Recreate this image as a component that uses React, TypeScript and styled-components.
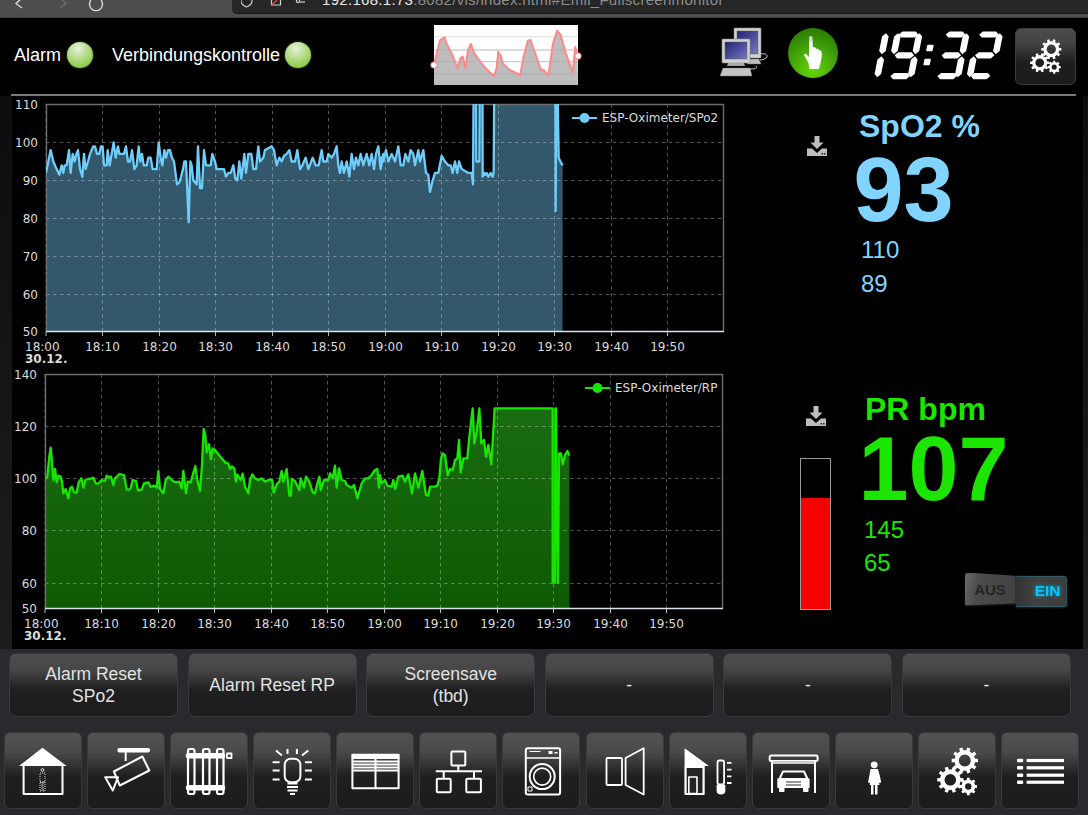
import React from 'react';
import styled, { createGlobalStyle } from 'styled-components';

const Global = createGlobalStyle`
  html, body { margin: 0; padding: 0; background: #282a2d; }
  * { box-sizing: border-box; }
`;

const FONT = `"Liberation Sans", Arial, sans-serif`;
const CHART_FONT = `"DejaVu Sans", Verdana, sans-serif`;

/* ---------- data, traced from the reference ---------- */
type P = [number, number];
const spo2A: P[] = [[138,92],[145,95],[152,98],[160,95],[170,93],[178,91.5],[185,94],[190,92],[194,94],[200,94],[207,98],[212,92],[218,97],[224,95],[229,97],[234,98],[240,93],[247,91],[252,97],[257,93],[264,95],[270,97],[280,99],[285,99],[291,97],[298,97],[303,99],[308,99],[312,94],[320,94],[323,98],[329,94],[335,97],[341,100],[347,96],[354,99],[358,97],[372,97],[378,99],[384,95],[390,95],[396,98],[403,93],[410,94],[416,99],[421,95],[426,97],[431,94],[440,94],[445,96],[452,96],[458,93],[470,93],[476,100],[482,96],[487,94],[493,98],[498,96],[504,98],[510,98],[516,96],[522,95],[528,91],[531,89],[538,89.5],[543,91],[549,93],[553,95],[558,95],[562,87],[566,79],[571,95],[575,94],[580,90],[590,89],[594,99],[600,88],[606,88],[612,98],[618,94],[625,94],[632,94],[637,97],[645,95],[650,93],[660,93],[672,93],[678,91],[685,92],[692,92],[700,94],[706,90.5],[712,90],[718,95],[724,90.5],[733,97],[738,92],[745,97],[754,97],[760,93],[768,93],[775,99],[780,95],[790,96],[795,98],[805,98.5],[815,99],[822,98],[830,94],[838,96],[845,95],[852,96.5],[860,97],[868,98],[875,95],[885,95],[892,98],[900,93],[907,94],[917,96],[925,93],[938,96],[947,94],[956,94],[965,98],[970,95],[980,95],[985,97],[995,96],[1002,97],[1010,99],[1015,94],[1020,92],[1025,95],[1032,92],[1040,95],[1048,91],[1055,97],[1062,93],[1068,96],[1075,94],[1082,97],[1090,94],[1100,97],[1108,94],[1115,97],[1122,93],[1128,97],[1135,99],[1142,93],[1150,97]];
const spo2B: P[] = [[0,94],[5,96],[10,95],[18,98],[25,95],[35,97],[45,95],[55,99],[62,94],[70,94],[76,97],[85,95],[92,98],[100,97],[105,94],[115,98],[120,95],[130,98],[138,92],[145,91.5],[150,87],[158,90],[165,92],[175,92],[185,96.5],[195,95],[205,94],[212,94],[218,92],[225,95],[232,92],[237,95],[245,93],[255,92.5],[265,92],[275,92],[279,89],[282,130],[288,130],[289,95],[298,95],[300,130],[307,130],[308,91],[312,92],[316,91.5],[320,92],[325,91],[332,92],[338,91],[341,92],[344,130],[526,130],[527,82],[530,130],[536,96],[541,95],[548,94]];
const rpA: P[] = [[135,340],[142,335],[148,275],[152,248],[156,290],[160,345],[165,312],[170,352],[175,332],[182,335],[186,350],[190,385],[197,372],[205,400],[210,370],[216,365],[222,382],[230,383],[236,352],[244,340],[250,368],[256,345],[265,342],[275,340],[280,338],[288,356],[296,355],[305,345],[315,348],[320,332],[326,336],[333,335],[340,360],[345,340],[358,327],[372,330],[380,373],[386,374],[392,370],[398,345],[408,348],[414,376],[425,374],[432,355],[445,352],[452,366],[462,362],[470,368],[475,318],[480,372],[490,385],[497,345],[505,335],[515,345],[525,352],[538,350],[545,370],[550,318],[558,385],[563,350],[572,352],[578,330],[586,303],[592,345],[600,378],[606,300],[611,192],[616,210],[620,262],[627,238],[633,282],[638,250],[645,255],[655,268],[665,280],[675,292],[685,296],[690,312],[696,304],[703,310],[708,350],[712,328],[722,345],[728,326],[735,365],[745,385],[750,345],[757,328],[765,340],[775,345],[785,340],[795,350],[805,345],[817,345],[821,383],[830,358],[838,350],[845,318],[850,350],[860,312],[868,392],[873,392],[875,342],[885,348],[898,375],[902,340],[912,368],[918,335],[928,350],[938,382],[945,385],[952,355],[958,335],[962,375],[972,345],[985,345],[990,325],[998,340],[1005,302],[1010,368],[1017,310],[1025,345],[1035,348],[1040,360],[1055,368],[1062,360],[1072,400],[1085,355],[1095,340],[1105,340],[1115,330],[1125,315],[1132,312],[1137,368]];
const rpB: P[] = [[0,330],[5,355],[15,345],[22,362],[35,365],[40,345],[46,372],[55,335],[68,332],[75,350],[85,328],[96,385],[105,325],[115,368],[127,318],[138,390],[145,392],[150,365],[165,365],[172,362],[178,340],[183,280],[188,265],[195,270],[203,330],[210,312],[218,315],[225,285],[232,280],[237,225],[242,322],[250,280],[262,280],[268,215],[278,130],[283,235],[290,200],[298,130],[304,235],[312,225],[318,275],[325,240],[334,298],[344,130],[518,130],[518,653],[525,653],[526,130],[528,130],[530,400],[534,653],[537,265],[543,265],[548,298],[555,270],[562,258],[568,272]];

const spo2Y = (v: number) => 142.5 + (100 - v) * 3.8;
const spo2Line: P[] = [
  ...spo2A.map(([x, v]): P => [x / 3, spo2Y(v)]),
  ...spo2B.map(([x, v]): P => [380 + x / 3, spo2Y(v)]),
];
const rpLine: P[] = [
  ...rpA.map(([x, y]): P => [x / 3, 365 + y / 3]),
  ...rpB.map(([x, y]): P => [380 + x / 3, 365 + y / 3]),
];

const LABELS = ['18:00','18:10','18:20','18:30','18:40','18:50','19:00','19:10','19:20','19:30','19:40','19:50'];
const TICKS = [46, 102.5, 159.5, 215.5, 272.5, 328.5, 385.5, 441.5, 498.5, 554.5, 611.5, 667.5];

/* ---------- layout ---------- */
const Page = styled.div`
  width: 1088px; height: 815px; overflow: hidden;
  background: #282a2d;
  display: flex; flex-direction: column;
  font-family: ${FONT};
`;
const BrowserBar = styled.div`
  height: 18px; flex: none; display: flex; align-items: flex-start;
  background: #4d4d4d; border-bottom: 1px solid #3c3c3c; overflow: hidden;
`;
const NavGroup = styled.div`
  width: 232px; flex: none; height: 13px;
`;
const UrlBar = styled.div`
  flex: 1; height: 13.5px; background: #262626; border-bottom-left-radius: 5px;
  border-bottom: 1px solid #1b1b1b;
  display: flex; align-items: flex-start; padding-left: 9px; overflow: hidden;
`;
const UrlText = styled.div`
  margin: -7px 0 0 13px; font-size: 15px; line-height: 13px; color: #8d8d8d; white-space: nowrap;
  letter-spacing: .3px;
`;
const UrlHost = styled.span` color: #e8e8e8; `;
const BarIcons = styled.svg` display: block; flex: none; `;

const Header = styled.header`
  height: 76px; flex: none; background: #000; display: flex; padding-left: 14px; color: #fff;
`;
const StatusText = styled.span<{ $ml?: number }>`
  font-size: 18px; line-height: 20px; margin: 27px 0 0 ${p => p.$ml ?? 0}px; color: #fff;
`;
const Ball = styled.span<{ $ml: number }>`
  width: 26px; height: 26px; border-radius: 50%; flex: none; margin: 24px 0 0 ${p => p.$ml}px;
  background: radial-gradient(circle at 42% 26%, #e8f2de 0%, #c2e2a2 30%, #98ce56 68%, #76b92c 100%);
  box-shadow: 0 0 2px #5f9a2a;
`;
const SparkSvg = styled.svg`
  display: block; flex: none; margin: 7px 0 0 123px; overflow: visible;
`;
const DrawnIcon = styled.svg<{ $ml: number; $mt: number }>`
  display: block; flex: none; margin: ${p => p.$mt}px 0 0 ${p => p.$ml}px; overflow: visible;
`;
const SettingsButton = styled.div`
  width: 61px; height: 57px; flex: none; margin: 10px 0 0 11px;
  background: linear-gradient(#4c4c4c 0%, #444 25%, #1e1e1e 60%, #1c1c1c 100%);
  border: 1px solid #3d3d3d; border-radius: 6px;
  display: flex; align-items: center; justify-content: center;
`;
const Separator = styled.div`
  flex: none; height: 2px; background: #000;
  &::before { content: ''; display: block; height: 1.5px; width: 1065px; margin-left: 11px; background: #7a7a7a; }
`;
const MainBand = styled.div`
  height: 553px; flex: none; padding: 0 5px 0 12px;
  background: linear-gradient(#0b0d0e, #1c1d1f);
`;
const Main = styled.main`
  height: 100%; background: #000; display: flex;
`;
const ChartColumn = styled.div`
  width: 720px; flex: none; display: flex; flex-direction: column;
`;
const ChartSvg = styled.svg`
  display: block; flex: none;
`;
const AxisText = styled.text<{ $bold?: boolean }>`
  font-family: ${CHART_FONT}; font-size: 12px; fill: #dcdcdc;
  font-weight: ${p => (p.$bold ? 700 : 400)};
`;
const ReadingColumn = styled.div`
  flex: 1; display: flex; flex-direction: column;
`;
const ReadingPanel = styled.section<{ $h: number; $pt: number }>`
  height: ${p => p.$h}px; padding-top: ${p => p.$pt}px; display: flex; position: relative;
`;
const SideColumn = styled.div<{ $w: number; $top: number }>`
  width: ${p => p.$w}px; flex: none; padding: ${p => p.$top}px 0 0 68px;
`;
const DownloadIcon = styled.svg<{ $ml: number }>`
  display: block; margin-left: ${p => p.$ml}px;
`;
const Gauge = styled.div<{ $level: number }>`
  width: 31px; height: 152px; margin-top: 32px;
  border: 1px solid #9a9a9a; background: #000; display: flex; align-items: flex-end;
  &::after { content: ''; display: block; width: 100%; height: ${p => p.$level}%; background: #f60000; }
`;
const ReadingText = styled.div<{ $c: string; $ml: number }>`
  color: ${p => p.$c}; flex: 1; margin-left: ${p => p.$ml}px;
`;
const Title = styled.div<{ $ml: number }>`
  font-size: 32px; line-height: 32px; font-weight: 700; margin-left: ${p => p.$ml}px; white-space: nowrap;
`;
const Value = styled.div<{ $mt: number }>`
  font-size: 90px; line-height: 80px; height: 80px; font-weight: 700; margin-top: ${p => p.$mt}px;
`;
const Limit = styled.div<{ $ml: number; $lh: number; $mt?: number }>`
  font-size: 24px; line-height: ${p => p.$lh}px; margin: ${p => p.$mt ?? 0}px 0 0 ${p => p.$ml}px;
`;
const Toggle = styled.div`
  width: 102px; height: 35px; margin: -6px 0 0 106px; display: flex;
  filter: drop-shadow(0 1px 1px #1c1c1c);
`;
const ToggleOff = styled.div`
  width: 51px; flex: none; height: 33px;
  background: linear-gradient(100deg, #6a6a6a, #4c4c4c 25%, #404040);
  clip-path: polygon(3% 0, 100% 10%, 100% 94%, 0 100%, 0 6%);
  border-radius: 3px 0 0 3px;
  display: flex; align-items: center; justify-content: center;
  font-size: 15px; font-weight: 700; color: #252525;
`;
const ToggleOn = styled.div`
  flex: 1; height: 31px; margin-top: 3px;
  background: linear-gradient(90deg, #343434, #414141 40%, #3c3c3c);
  border: 1px solid rgba(0, 190, 240, .22); border-left: none; border-radius: 0 3px 3px 0;
  box-shadow: 0 0 2px rgba(0, 190, 240, .3);
  display: flex; align-items: center; justify-content: flex-end; padding-right: 5px;
  font-size: 15.5px; font-weight: 700; color: #00c8ff;
  text-shadow: 0 0 4px rgba(0, 200, 255, .7);
`;
const ActionRow = styled.div`
  margin-top: 4px; padding-left: 9px; display: flex; gap: 9.6px; flex: none;
`;
const ActionButton = styled.button`
  width: 169px; height: 64px; padding: 0 6px; flex: none;
  font: 17.5px/22px ${FONT}; color: #e2e2e2; text-align: center;
  background: linear-gradient(#4d4d4d 0%, #474747 25%, #1f1f1f 58%, #1d1d1d 100%);
  border: 1px solid #3a3a3a; border-radius: 7px;
`;
const NavRow = styled.nav`
  margin-top: 15px; padding-left: 4px; display: flex; gap: 5.08px; flex: none;
`;
const NavButton = styled.div`
  width: 78px; height: 77px; flex: none;
  background: linear-gradient(#525252 0%, #4a4a4a 25%, #1f1f1f 58%, #1c1c1c 100%);
  border: 1px solid #38393b; border-radius: 6px;
  display: flex; align-items: center; justify-content: center;
`;
const NavIcon = styled.svg`
  width: 60px; height: 60px; display: block; flex: none;
  fill: none; stroke: #fff; stroke-width: 2; stroke-linejoin: round;
`;

/* ---------- drawings ---------- */
function gear(cx: number, cy: number, r: number, teeth: number, hole: number) {
  const inner = r * 0.78;
  let d = '';
  const step = (Math.PI * 2) / teeth;
  for (let i = 0; i < teeth; i++) {
    const a = i * step;
    const pts: [number, number][] = [
      [inner, a - step * 0.5],
      [inner, a - step * 0.27],
      [r, a - step * 0.2],
      [r, a + step * 0.2],
      [inner, a + step * 0.27],
    ];
    pts.forEach(([rr, t], j) => {
      d += `${i === 0 && j === 0 ? 'M' : 'L'}${(cx + rr * Math.cos(t)).toFixed(2)} ${(cy + rr * Math.sin(t)).toFixed(2)}`;
    });
  }
  d += 'Z';
  d += `M${cx - hole} ${cy}a${hole} ${hole} 0 1 0 ${hole * 2} 0a${hole} ${hole} 0 1 0 ${-hole * 2} 0Z`;
  return d;
}

/* seven-segment lamp display */
const SEG: Record<string, number[]> = { '1': [1, 2], '9': [0, 1, 2, 3, 5, 6], '3': [0, 1, 2, 3, 6], '2': [0, 1, 3, 4, 6] };
const SW = 21.5, HT = 3.1, VT = 3.3;
const hSeg = (y: number) => `1,${y} ${1 + HT},${y - HT} ${SW - 1 - HT},${y - HT} ${SW - 1},${y} ${SW - 1 - HT},${y + HT} ${1 + HT},${y + HT}`;
const vSeg = (x: number, y0: number, y1: number) => `${x},${y0} ${x + VT},${y0 + VT} ${x + VT},${y1 - VT} ${x},${y1} ${x - VT},${y1 - VT} ${x - VT},${y0 + VT}`;
const SEGS = [hSeg(3.2), vSeg(SW, 2, 23), vSeg(SW, 25, 46), hSeg(44.8), vSeg(0, 25, 46), vSeg(0, 2, 23), hSeg(24)];
const Digit = ({ d, x }: { d: string; x: number }) => (
  <g transform={`translate(${x} 0)`}>
    {SEG[d].map(i => <polygon key={i} points={SEGS[i]} fill="#fff" />)}
  </g>
);
const Clock = () => (
  <DrawnIcon $ml={37} $mt={12} width={129} height={50} viewBox="0 0 129 50" role="img" aria-label="19:32">
    <g transform="translate(0 1.300) skewX(-11.300)">
      <Digit d="1" x={-10.1} />
      <Digit d="9" x={23.4} />
      <rect x="55" y="13.500" width="6.500" height="6.500" rx="1" fill="#fff" />
      <rect x="55" y="27.500" width="6.500" height="6.500" rx="1" fill="#fff" />
      <Digit d="3" x={70.4} />
      <Digit d="2" x={103.8} />
    </g>
  </DrawnIcon>
);

const Spark = () => {
  const a: P[] = [[1252,195],[1262,150],[1270,120],[1282,112],[1290,135],[1305,165],[1320,205],[1328,175],[1335,170],[1342,205],[1350,150],[1358,132],[1368,160],[1385,185],[1405,210],[1425,228],[1432,205],[1437,155],[1445,170],[1450,190],[1470,210],[1500,225],[1510,170],[1522,122],[1530,120],[1545,165],[1560,210]];
  const b: P[] = [[0,210],[15,225],[28,130],[40,92],[50,105],[65,160],[85,218],[92,140],[98,168]];
  const pts: P[] = [
    ...a.map(([x, y]): P => [x / 2.88 - 434.7, y / 3 - 25]),
    ...b.map(([x, y]): P => [544 + x / 2.88 - 434.7, y / 3 - 25]),
  ];
  const s = pts.map(p => p.join(',')).join(' ');
  return (
    <SparkSvg width={144} height={60} viewBox="0 0 144 60">
      <rect width="144" height="60" fill="#fff" />
      {[11.7, 25, 36.7, 49].map(y => <line key={y} x1="0" x2="144" y1={y} y2={y} stroke="#ddd" />)}
      <polygon points={`${s} 144,60 0,60`} fill="#bdbdbd" />
      {[25, 36.7, 49].map(y => <line key={y} x1="0" x2="144" y1={y} y2={y} stroke="#aaa" strokeOpacity=".5" />)}
      <polyline points={s} fill="none" stroke="#f88" strokeWidth="2" strokeLinejoin="round" />
      <circle cx="0" cy="40" r="3.2" fill="#fff" stroke="#f77" strokeWidth="1" />
      <circle cx="144" cy="31" r="3.2" fill="#fff" stroke="#f77" strokeWidth="1" />
    </SparkSvg>
  );
};

const Screen = ({ x, y, w, h, id }: { x: number; y: number; w: number; h: number; id: string }) => (
  <g>
    <rect x={x} y={y} width={w} height={h} fill="#d2d2d2" stroke="#8a8a8a" strokeWidth=".6" rx="1" />
    <rect x={x + 3} y={y + 3} width={w - 6} height={h - 7} fill={`url(#${id})`} stroke="#666" strokeWidth=".5" />
  </g>
);
const Computers = () => (
  <DrawnIcon $ml={142} $mt={10} width={48} height={48} viewBox="0 0 48 48">
    <defs>
      <linearGradient id="scr" x1="0" y1="0" x2="1" y2="1">
        <stop offset="0" stopColor="#23236a" /><stop offset=".5" stopColor="#4b4b9c" /><stop offset="1" stopColor="#7a7ab8" />
      </linearGradient>
    </defs>
    <Screen x={14} y={0} w={27} h={30} id="scr" />
    <path d="M29 31h10l2 5H27z" fill="#bdbdbd" stroke="#777" strokeWidth=".5" />
    <path d="M40 26c5-1 8 1 7 3s-5 3-7 3" fill="none" stroke="#c8c8c8" strokeWidth="1" />
    <Screen x={2} y={11} w={28} h={24} id="scr" />
    <path d="M8 35h16l1 3H7z" fill="#aaa" />
    <path d="M3 40h27l2 8H0z" fill="#c4c4c4" stroke="#777" strokeWidth=".5" />
    <path d="M30 41c4 0 8 0 6-3" fill="none" stroke="#c8c8c8" strokeWidth="1" />
  </DrawnIcon>
);
const TouchButton = () => (
  <DrawnIcon $ml={20} $mt={10} width={50} height={50} viewBox="0 0 50 50">
    <defs>
      <radialGradient id="tb" cx=".5" cy=".85" r=".8">
        <stop offset="0" stopColor="#66d600" /><stop offset=".55" stopColor="#43a60a" /><stop offset="1" stopColor="#2e8000" />
      </radialGradient>
    </defs>
    <circle cx="25" cy="25" r="25" fill="url(#tb)" />
    <path d="M21 9.500Q22.500 7 24.500 9.500L24.800 19.500L27 19L28 21L30 20.500L31 22.500L33 22.500L34 26L33 33L31 41L21.500 41L20.500 35L16 27Q16 25 18 26L21 29Z" fill="#fff" />
    <rect x="21.400" y="9.500" width="2.200" height="4" rx="1" fill="none" stroke="#8a8a8a" strokeWidth=".6" />
  </DrawnIcon>
);
const Gears = () => (
  <svg width={61} height={57} viewBox="0 0 61 57" fill="#fff" style={{ display: 'block' }}>
    <path fillRule="evenodd" d={gear(36.5, 21, 10.5, 10, 4.8)} />
    <path fillRule="evenodd" d={gear(24.5, 35, 10, 10, 4.5)} />
    <path fillRule="evenodd" d={gear(39.5, 39.5, 6.8, 8, 2.6)} />
  </svg>
);
const Download = ({ ml }: { ml: number }) => (
  <DownloadIcon $ml={ml} width={20} height={20} viewBox="0 0 20 20">
    <path d="M7.5 0h5v6.5h4L10 13 3.5 6.5h4zM0 12.5h5L10 17l5-4.5h5V20H0z" fill="#bdbdbd" />
    <rect x="14.5" y="17" width="1.5" height="1.5" fill="#222" />
    <rect x="17" y="17" width="1.5" height="1.5" fill="#222" />
  </DownloadIcon>
);

type ChartProps = {
  originY: number; height: number; left: number; right: number; top: number; bottom: number;
  line: P[]; endX: number; color: string; fillFrom: string; fillTo: string;
  yTicks: [string, number][]; dx: number; legend: string; legendX: number; id: string;
};
const Chart = ({ originY, height, left, right, top, bottom, line, endX, color, fillFrom, fillTo, yTicks, dx, legend, legendX, id }: ChartProps) => {
  const s = line.map(p => p.join(',')).join(' ');
  const first = line[0];
  const labelY = bottom + 19;
  return (
    <ChartSvg width={720} height={height} viewBox={`12 ${originY} 720 ${height}`}>
      <defs>
        <clipPath id={id}><rect x={left} y={top} width={right - left} height={bottom - top} /></clipPath>
        <linearGradient id={id + 'f'} x1="0" y1="0" x2="0" y2="1">
          <stop offset="0" stopColor={fillFrom} /><stop offset="1" stopColor={fillTo} />
        </linearGradient>
      </defs>
      <g clipPath={`url(#${id})`}>
        <polygon points={`${first[0]},${bottom} ${s} ${endX},${bottom}`} fill={`url(#${id}f)`} />
      </g>
      {TICKS.map(t => (
        <line key={t} x1={t + dx} x2={t + dx} y1={top} y2={bottom} stroke="#fff" strokeOpacity=".32" strokeDasharray="3.5 3.5" />
      ))}
      {yTicks.slice(1, -1).map(([l, y]) => (
        <line key={l} x1={left} x2={right} y1={y} y2={y} stroke="#fff" strokeOpacity=".32" strokeDasharray="3.5 3.5" />
      ))}
      <path d={`M${left + .5} ${bottom}V${top + .5}H${right - .5}V${bottom}`} fill="none" stroke="#6e6e6e" strokeWidth="1.4" />
      <line x1={left} x2={right} y1={bottom - .5} y2={bottom - .5} stroke="#d8e4ea" strokeWidth="1.4" />
      <g clipPath={`url(#${id})`}>
        <polyline points={s} fill="none" stroke={color} strokeWidth="2.3" strokeLinejoin="round" />
      </g>
      {TICKS.map(t => <line key={t} x1={t + dx} x2={t + dx} y1={bottom} y2={bottom + 4} stroke="#bbb" />)}
      {yTicks.map(([l, y]) => <AxisText key={l} x={38 + dx} y={y + 4} textAnchor="end">{l}</AxisText>)}
      {LABELS.map((l, i) => (
        <AxisText key={l} x={i === 0 ? 25 + dx : TICKS[i] + dx} y={labelY} textAnchor={i === 0 ? 'start' : 'middle'}>{l}</AxisText>
      ))}
      <AxisText $bold x={25 + dx} y={bottom + 31}>30.12.</AxisText>
      <line x1={legendX} x2={legendX + 25} y1={top + 14} y2={top + 14} stroke={color} strokeWidth="2" />
      <circle cx={legendX + 12.5} cy={top + 14} r="5" fill={color} />
      <AxisText x={legendX + 30} y={top + 18}>{legend}</AxisText>
    </ChartSvg>
  );
};

/* nav icons; each is drawn on a 60x60 field centred in its button */
const FILL = { fill: '#fff', stroke: 'none' };
const navIcons: React.ReactNode[] = [
  <>
    <polygon points="29.4,6.8 53.7,25 6,25" {...FILL} />
    <path d="M10.6 25V53H49.5V25" />
    <g strokeWidth="1" stroke="#ddd">
      <circle cx="29.5" cy="29" r="1.4" />
      <path d="M27 32h5v9h-5zM27 41h2v9h-2zM30 41h2v9h-2z" strokeDasharray="1 1" />
    </g>
  </>,
  <>
    <rect x="21.4" y="7" width="32.6" height="4.6" rx="2" {...FILL} />
    <line x1="29.7" y1="11" x2="29.7" y2="20" />
    <polygon points="17.9,30.5 46.4,15.5 53.3,29.5 23.8,44.5" />
    <polygon points="9.2,36.2 22,36.2 16.8,49.5" />
  </>,
  <>
    <rect x="9" y="8" width="6.5" height="45" rx="2" strokeWidth="2.2" />
    <rect x="24" y="8" width="6.5" height="45" rx="2" strokeWidth="2.2" />
    <rect x="38" y="8" width="6.5" height="45" rx="2" strokeWidth="2.2" />
    <rect x="6.8" y="12" width="39.4" height="5.5" rx="2.7" {...FILL} />
    <rect x="6.8" y="44" width="39.4" height="5.5" rx="2.7" {...FILL} />
    <rect x="48" y="12.500" width="4.5" height="4.5" strokeWidth="1.8" />
  </>,
  <>
    <rect x="22.7" y="17.8" width="15.7" height="23.4" rx="6" />
    <path d="M25.5 42.5h10M25 46h11M25.5 49.5h10M28 53h5" strokeWidth="2.2" />
    <path d="M10.6 21.2h7M10.6 29.5h7M10.6 38.5h7M42.9 21.2h7M42.9 29.5h7M42.9 38.5h7M14 9.5l5.9 5M25.5 8v5M34.9 8v5M46.3 9.5l-6.3 5" strokeWidth="2" />
  </>,
  <>
    <rect x="7.4" y="13.8" width="46.2" height="33.4" />
    <rect x="6.8" y="13" width="47.4" height="5" {...FILL} />
    <path d="M7.4 20.500h46.2M7.4 23.500h46.2M7.4 26.500h46.2" strokeWidth="1.8" />
    <line x1="7.4" y1="29.500" x2="53.6" y2="29.500" />
    <line x1="30.5" y1="18" x2="30.5" y2="47" />
  </>,
  <>
    <rect x="23.4" y="10.5" width="13.9" height="14" rx="1" />
    <path d="M30.3 24.5V30.2M7.8 30.2H54M15.7 30.2V37.8M46 30.2V37.8" />
    <rect x="8.8" y="37.8" width="13.9" height="13.4" rx="1" />
    <rect x="38.3" y="37.8" width="14.6" height="13.4" rx="1" />
  </>,
  <>
    <g transform="translate(1.500 0)">
      <rect x="13.3" y="7.2" width="34.3" height="46.3" rx="2" />
      <line x1="13.3" y1="17" x2="47.6" y2="17" strokeWidth="1.6" />
      <circle cx="29.7" cy="35.6" r="12.5" strokeWidth="2" />
      <circle cx="29.7" cy="35.6" r="8.5" strokeWidth="1.6" />
      <rect x="15.5" y="46" width="4" height="4" strokeWidth="1" />
      <rect x="36" y="10" width="4" height="3" {...FILL} />
      <rect x="42" y="11" width="3" height="1.5" {...FILL} />
      <path d="M17 10.5h11" strokeWidth="1" />
    </g>
  </>,
  <>
    <rect x="11.5" y="17" width="15.5" height="27" rx="1" strokeWidth="1.8" />
    <polygon points="30.6,17 48.7,7.2 48.7,53.5 30.6,44" strokeWidth="1.8" />
  </>,
  <>
    <polygon points="6.6,7.2 31,25 26.4,25 26.4,53.5 6.6,53.5" fill="#fff" stroke="none" />
    <rect x="8.3" y="27" width="16.4" height="25" fill="#242424" stroke="none" />
    <rect x="10.8" y="36" width="8.2" height="16.5" strokeWidth="1.6" />
    <rect x="7.6" y="25" width="18" height="28" strokeWidth="1.8" />
    <rect x="39.5" y="19.5" width="6.6" height="24" rx="2" strokeWidth="1.8" />
    <path d="M38.6 44h8.7v6c0 2-1.5 3.5-4.3 3.5s-4.4-1.5-4.4-3.5z" {...FILL} />
    <path d="M49 21.8h4.5M49 28.6h4.5M49 35.4h4.5M49 42h4.5" strokeWidth="1.8" />
  </>,
  <>
    <rect x="8.7" y="14.5" width="47.9" height="5.5" rx="1.5" />
    <rect x="11" y="20" width="43" height="3" fill="#ccc" stroke="none" />
    <path d="M11 20V52M54 20V52" />
    <path d="M18.5 38l3.5-7.5h21l3.5 7.5z" strokeWidth="2" />
    <path d="M16.3 37.5h32.3v9.5H16.3z" {...FILL} />
    <rect x="18" y="46" width="5.5" height="5" rx="1" {...FILL} />
    <rect x="42" y="46" width="5.5" height="5" rx="1" {...FILL} />
    <path d="M25 41h15M25 44h15" stroke="#333" strokeWidth="1.2" />
  </>,
  <>
    <circle cx="30.2" cy="23.8" r="3.4" {...FILL} />
    <path d="M26.500 28h7.400l2 7 1.300 6.500-2.200.5-.8-5 1.300 7h-9.800l1.300-7-.8 5-2.200-.5 1.300-6.500z" {...FILL} />
    <path d="M27 43h2.500v10.500H27zM31 43h2.500v10.500H31z" {...FILL} />
  </>,
  <>
    <path fillRule="evenodd" d={gear(37.8, 19.5, 13.2, 10, 6)} {...FILL} />
    <path fillRule="evenodd" d={gear(23.3, 38.8, 13.2, 10, 5.800)} {...FILL} />
    <path fillRule="evenodd" d={gear(41.3, 45.5, 8.8, 8, 3.2)} {...FILL} />
  </>,
  <>
    {[19.5, 26.8, 34.2, 41.2].map(y => (
      <React.Fragment key={y}>
        <rect x="7" y={y - 1.8} width="6.2" height="3.6" rx="1" {...FILL} />
        <rect x="16.6" y={y - 1.6} width="37.4" height="3.2" {...FILL} />
      </React.Fragment>
    ))}
  </>,
];

const actions: [string, string?][] = [['Alarm Reset', 'SPo2'], ['Alarm Reset RP'], ['Screensave', '(tbd)'], ['-'], ['-'], ['-']];

export default function App() {
  return (
    <Page>
      <Global />
      <BrowserBar>
        <NavGroup>
          <BarIcons width={232} height={13} viewBox="0 0 232 13" fill="none" stroke="#d8d8d8" strokeWidth="1.4">
            <path d="M22-2L16 3.500 22 8" />
            <path d="M60-2L66 3.500 60 8" stroke="#6e6e6e" />
            <path d="M101 0a6.500 6.500 0 1 1-10 0" />
          </BarIcons>
        </NavGroup>
        <UrlBar>
          <BarIcons width={68} height={13} viewBox="0 0 68 13" fill="none" stroke="#cfcfcf" strokeWidth="1.2">
            <path d="M0-4h11v5c0 3-3 5-5.500 6C3 6 0 4 0 1z" />
            <path d="M30.500-3h9v8h-9z" />
            <path d="M30.500 5l9-8" stroke="#e5484d" />
            <circle cx="57" cy="1" r="1.600" />
            <path d="M59 2h5" />
          </BarIcons>
          <UrlText><UrlHost>192.168.1.73</UrlHost>:8082/vis/index.html#Emil_Fullscreenmonitor</UrlText>
        </UrlBar>
      </BrowserBar>
      <Header>
        <StatusText>Alarm</StatusText>
        <Ball $ml={6} />
        <StatusText $ml={19}>Verbindungskontrolle</StatusText>
        <Ball $ml={5} />
        <Spark />
        <Computers />
        <TouchButton />
        <Clock />
        <SettingsButton><Gears /></SettingsButton>
      </Header>
      <Separator />
      <MainBand>
        <Main>
          <ChartColumn>
            <Chart
              id="c1" originY={96} height={270} left={46} right={724} top={104} bottom={332}
              line={spo2Line} endX={562.5} color="#6fcdfb" fillFrom="#33586b" fillTo="#33586b"
              yTicks={[['110', 104.5], ['100', 142.5], ['90', 180.5], ['80', 218.5], ['70', 256.5], ['60', 294.5], ['50', 332]]}
              dx={0} legend="ESP-Oximeter/SPo2" legendX={572}
            />
            <Chart
              id="c2" originY={366} height={283} left={45} right={723} top={374} bottom={609}
              line={rpLine} endX={569.3} color="#19e600" fillFrom="#196c10" fillTo="#0d5a03"
              yTicks={[['140', 374.5], ['120', 426.5], ['100', 478.5], ['80', 530.5], ['60', 583.5], ['50', 609]]}
              dx={-1} legend="ESP-Oximeter/RP" legendX={585}
            />
          </ChartColumn>
          <ReadingColumn>
            <ReadingPanel $h={270} $pt={14}>
              <SideColumn $w={120} $top={26}><Download ml={7} /></SideColumn>
              <ReadingText $c="#80d4ff" $ml={1.5}>
                <Title $ml={5.5}>SpO2 %</Title>
                <Value $mt={8}>93</Value>
                <Limit $ml={7.5} $lh={34} $mt={2.5}>110</Limit>
                <Limit $ml={7.5} $lh={34}>89</Limit>
              </ReadingText>
            </ReadingPanel>
            <ReadingPanel $h={283} $pt={27}>
              <SideColumn $w={125} $top={13}>
                <Download ml={6} />
                <Gauge $level={74} />
              </SideColumn>
              <ReadingText $c="#1ce600" $ml={1.5}>
                <Title $ml={6.5}>PR bpm</Title>
                <Value $mt={4}>107</Value>
                <Limit $ml={5.5} $lh={33} $mt={3.5}>145</Limit>
                <Limit $ml={5.5} $lh={33}>65</Limit>
                <Toggle>
                  <ToggleOff>AUS</ToggleOff>
                  <ToggleOn>EIN</ToggleOn>
                </Toggle>
              </ReadingText>
            </ReadingPanel>
          </ReadingColumn>
        </Main>
      </MainBand>
      <ActionRow>
        {actions.map(([a, b], i) => (
          <ActionButton key={i}>{a}{b && <><br />{b}</>}</ActionButton>
        ))}
      </ActionRow>
      <NavRow>
        {navIcons.map((icon, i) => (
          <NavButton key={i}><NavIcon viewBox="0 0 60 60">{icon}</NavIcon></NavButton>
        ))}
      </NavRow>
    </Page>
  );
}
